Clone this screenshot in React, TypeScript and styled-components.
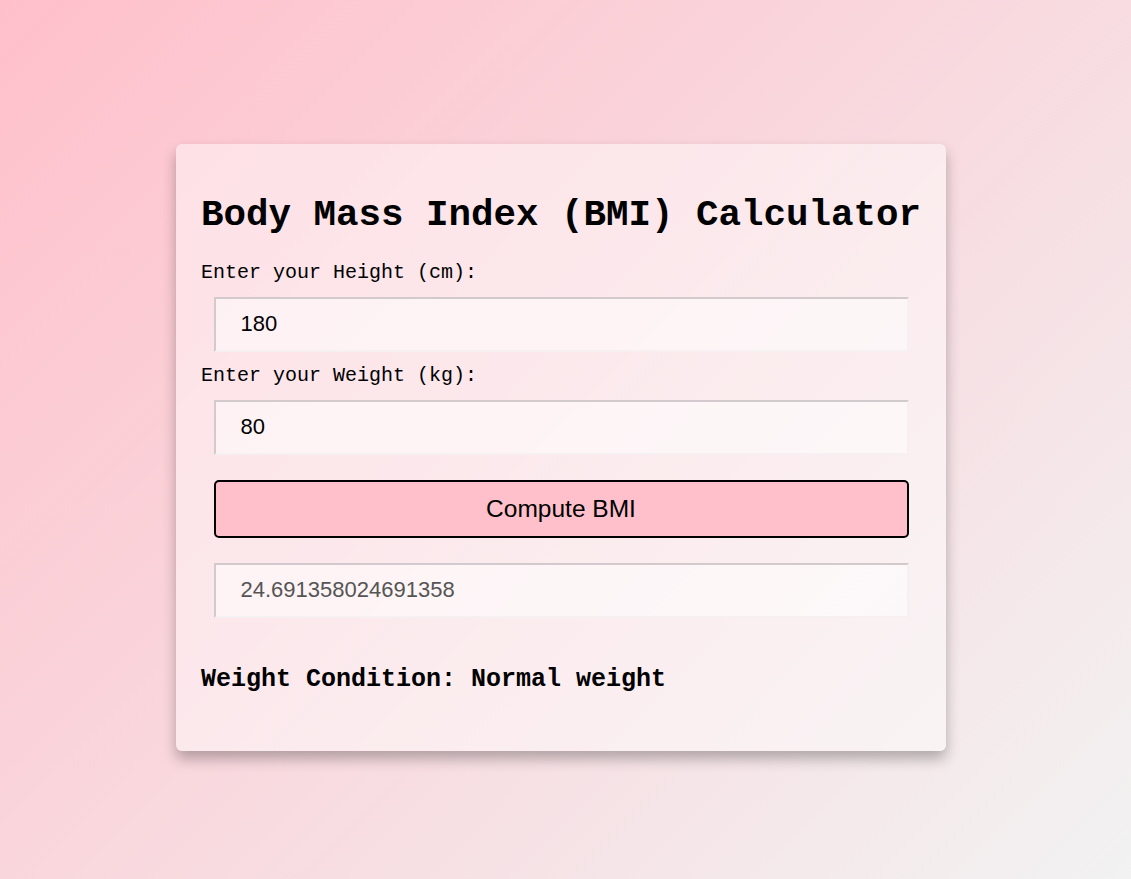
import styled, { createGlobalStyle } from "styled-components";

const GlobalStyle = createGlobalStyle`
  html, body {
    margin: 0;
    padding: 0;
  }
  body {
    min-height: 100vh;
    background: linear-gradient(135deg, #ffc0cb 0%, #f2f2f2 100%);
    font-family: "Liberation Mono", "Courier New", monospace;
  }
`;

const Page = styled.div`
  min-height: 100vh;
  box-sizing: border-box;
  padding: 144px 9px 0 0;
  display: flex;
  justify-content: center;
  align-items: flex-start;
`;

const Card = styled.div`
  width: 770px;
  box-sizing: border-box;
  padding: 25px;
  border-radius: 6px;
  background: rgba(255, 255, 255, 0.45);
  box-shadow: 0 8px 14px rgba(0, 0, 0, 0.28);
  display: flex;
  flex-direction: column;
`;

const Title = styled.h1`
  margin: 25px 0;
  font-size: 37.5px;
  font-weight: bold;
  color: #000;
  white-space: nowrap;
`;

const Label = styled.label`
  font-size: 20px;
  color: #000;
`;

const Field = styled.input<{ $muted?: boolean }>`
  box-sizing: border-box;
  height: 55px;
  margin: 12.5px;
  padding: 0 25px;
  font-family: "Liberation Sans", Arial, sans-serif;
  font-size: 22px;
  color: ${(p) => (p.$muted ? "#555" : "#000")};
  background: rgba(255, 255, 255, 0.5);
  border: 2px solid;
  border-color: #d2cacc #f7f0f2 #f7f0f2 #d2cacc;
  outline: none;
`;

const ComputeButton = styled.button`
  box-sizing: border-box;
  height: 58px;
  margin: 12.5px;
  font-family: "Liberation Sans", Arial, sans-serif;
  font-size: 24.5px;
  color: #000;
  background: #ffc0cb;
  border: 2px solid #000;
  border-radius: 5px;
  cursor: pointer;
`;

const Condition = styled.h3`
  margin: 35px 0 32px;
  font-size: 25px;
  font-weight: bold;
  color: #000;
`;

export default function App() {
  const height = 180;
  const weight = 80;
  const bmi = weight / Math.pow(height / 100, 2);

  return (
    <>
      <GlobalStyle />
      <Page>
        <Card>
          <Title>Body Mass Index (BMI) Calculator</Title>
          <Label>Enter your Height (cm):</Label>
          <Field type="text" defaultValue={String(height)} />
          <Label>Enter your Weight (kg):</Label>
          <Field type="text" defaultValue={String(weight)} />
          <ComputeButton type="button">Compute BMI</ComputeButton>
          <Field type="text" readOnly $muted value={String(bmi)} />
          <Condition>Weight Condition: Normal weight</Condition>
        </Card>
      </Page>
    </>
  );
}
